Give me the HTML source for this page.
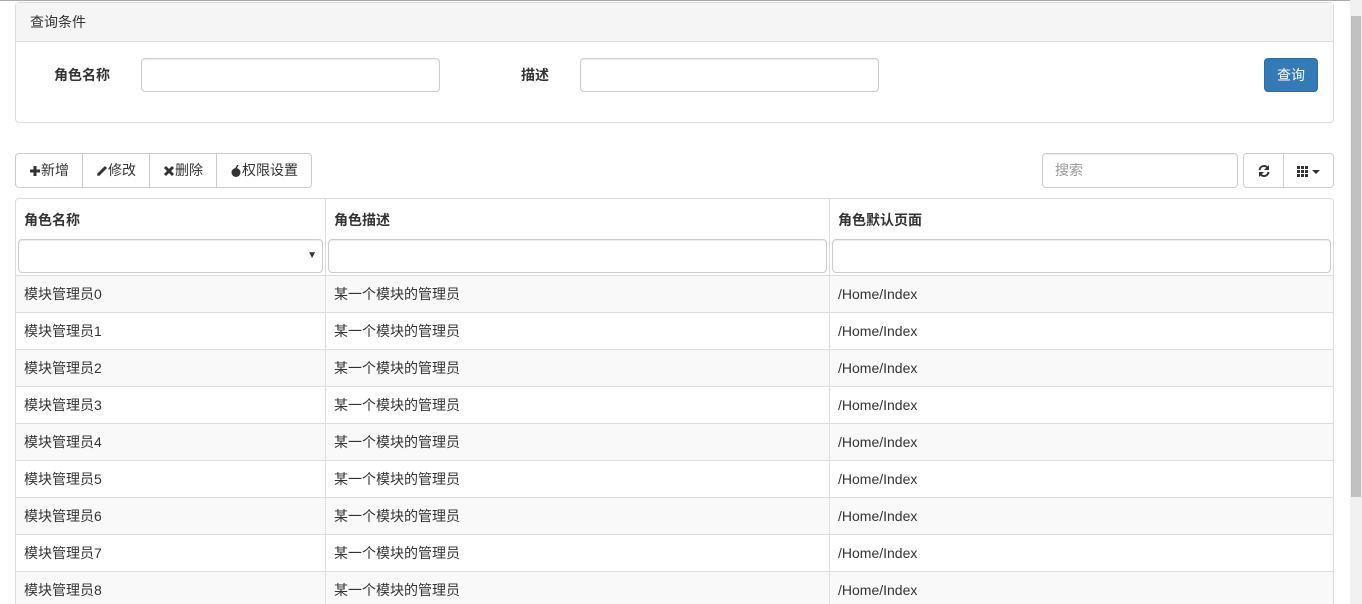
<!DOCTYPE html><html><head><meta charset="utf-8"><style>
*{box-sizing:border-box}html,body{margin:0;width:1362px;height:604px;overflow:hidden}body{background:#fff;font-family:"Liberation Sans","Noto Sans CJK SC",sans-serif;font-size:14px;color:#333;position:relative}
.a{position:absolute}
.inp{position:absolute;border:1px solid #ccc;border-radius:4px;background:#fff;box-shadow:inset 0 1px 1px rgba(0,0,0,.075)}
.btn{position:absolute;top:153px;height:35px;border:1px solid #ccc;background:#fff;line-height:33px;text-align:center;font-size:14px}
.row{position:absolute;left:16px;width:1317px;height:37px;border-top:1px solid #ddd;line-height:36px;font-size:14px}
.row span{position:absolute}
.vl{position:absolute;top:199px;height:405px;width:1px;background:#ddd}
svg{vertical-align:middle}
</style></head><body>
<div class="a" style="left:0;top:0;width:1362px;height:1px;background:#aaa"></div>
<div class="a" style="left:15px;top:2px;width:1319px;height:121px;border:1px solid #ddd;border-radius:4px"></div>
<div class="a" style="left:16px;top:3px;width:1317px;height:39px;background:#f5f5f5;border-bottom:1px solid #ddd;line-height:38px;padding-left:14px">查询条件</div>
<div class="a" style="left:54px;top:65px;font-weight:bold">角色名称</div>
<div class="inp" style="left:141px;top:58px;width:299px;height:34px"></div>
<div class="a" style="left:521px;top:65px;font-weight:bold">描述</div>
<div class="inp" style="left:580px;top:58px;width:299px;height:34px"></div>
<div class="a" style="left:1264px;top:58px;width:54px;height:34px;background:#337ab7;border:1px solid #2e6da4;border-radius:4px;color:#fff;text-align:center;line-height:32px">查询</div>

<div class="btn" style="left:15px;width:68px;border-radius:4px 0 0 4px"><svg width="12" height="12"><path d="M6 1V11M1 6H11" stroke="#333" stroke-width="3"/></svg>新增</div>
<div class="btn" style="left:82px;width:68px"><svg width="12" height="12"><path d="M2 10L10 2" stroke="#333" stroke-width="3"/><path d="M1 11L2 8L4 10Z" fill="#333"/></svg>修改</div>
<div class="btn" style="left:149px;width:68px"><svg width="12" height="12"><path d="M2 2L10 10M10 2L2 10" stroke="#333" stroke-width="3"/></svg>删除</div>
<div class="btn" style="left:216px;width:96px;border-radius:0 4px 4px 0"><svg width="12" height="12"><circle cx="6" cy="7.5" r="4.5" fill="#333"/><path d="M6 3L8 0" stroke="#333" stroke-width="1.5"/></svg>权限设置</div>
<div class="inp" style="left:1042px;top:153px;width:196px;height:35px;color:#999;line-height:33px;padding-left:12px">搜索</div>
<div class="btn" style="left:1243px;width:41px;border-radius:4px 0 0 4px"><svg width="14" height="14" viewBox="0 0 14 14"><path d="M2.5 6A4.5 4.5 0 0 1 11 4.5M11.5 8A4.5 4.5 0 0 1 3 9.5" stroke="#333" stroke-width="2" fill="none"/><path d="M12 1V6H7Z M2 13V8H7Z" fill="#333"/></svg></div>
<div class="btn" style="left:1283px;width:51px;border-radius:0 4px 4px 0"><svg width="24" height="12"><g fill="#333"><rect x="0" y="1" width="3" height="3"/><rect x="4" y="1" width="3" height="3"/><rect x="8" y="1" width="3" height="3"/><rect x="0" y="5" width="3" height="3"/><rect x="4" y="5" width="3" height="3"/><rect x="8" y="5" width="3" height="3"/><rect x="0" y="9" width="3" height="3"/><rect x="4" y="9" width="3" height="3"/><rect x="8" y="9" width="3" height="3"/><path d="M15 5H23L19 9Z"/></g></svg></div>

<div class="a" style="left:15px;top:198px;width:1319px;height:420px;border:1px solid #ddd;border-radius:4px"></div>
<div class="vl" style="left:325px"></div><div class="vl" style="left:829px"></div>
<div class="a" style="left:24px;top:210px;font-weight:bold">角色名称</div>
<div class="a" style="left:334px;top:210px;font-weight:bold">角色描述</div>
<div class="a" style="left:838px;top:210px;font-weight:bold">角色默认页面</div>
<div class="inp" style="left:18px;top:239px;width:305px;height:34px;font-size:10px;text-align:right;line-height:32px;padding-right:5px">▼</div>
<div class="inp" style="left:328px;top:239px;width:499px;height:34px"></div>
<div class="inp" style="left:832px;top:239px;width:499px;height:34px"></div>

<div class="row" style="top:275px;background:#f9f9f9"><span style="left:8px">模块管理员0</span><span style="left:318px">某一个模块的管理员</span><span style="left:822px">/Home/Index</span></div>
<div class="row" style="top:312px"><span style="left:8px">模块管理员1</span><span style="left:318px">某一个模块的管理员</span><span style="left:822px">/Home/Index</span></div>
<div class="row" style="top:349px;background:#f9f9f9"><span style="left:8px">模块管理员2</span><span style="left:318px">某一个模块的管理员</span><span style="left:822px">/Home/Index</span></div>
<div class="row" style="top:386px"><span style="left:8px">模块管理员3</span><span style="left:318px">某一个模块的管理员</span><span style="left:822px">/Home/Index</span></div>
<div class="row" style="top:423px;background:#f9f9f9"><span style="left:8px">模块管理员4</span><span style="left:318px">某一个模块的管理员</span><span style="left:822px">/Home/Index</span></div>
<div class="row" style="top:460px"><span style="left:8px">模块管理员5</span><span style="left:318px">某一个模块的管理员</span><span style="left:822px">/Home/Index</span></div>
<div class="row" style="top:497px;background:#f9f9f9"><span style="left:8px">模块管理员6</span><span style="left:318px">某一个模块的管理员</span><span style="left:822px">/Home/Index</span></div>
<div class="row" style="top:534px"><span style="left:8px">模块管理员7</span><span style="left:318px">某一个模块的管理员</span><span style="left:822px">/Home/Index</span></div>
<div class="row" style="top:571px;background:#f9f9f9"><span style="left:8px">模块管理员8</span><span style="left:318px">某一个模块的管理员</span><span style="left:822px">/Home/Index</span></div>
<div class="vl" style="left:325px;top:275px;height:329px"></div><div class="vl" style="left:829px;top:275px;height:329px"></div>

<div class="a" style="left:1350px;top:0;width:12px;height:604px;background:#f1f1f1"></div>
<div class="a" style="left:1351px;top:16px;width:10px;height:481px;background:#c1c1c1"></div>
</body></html>
